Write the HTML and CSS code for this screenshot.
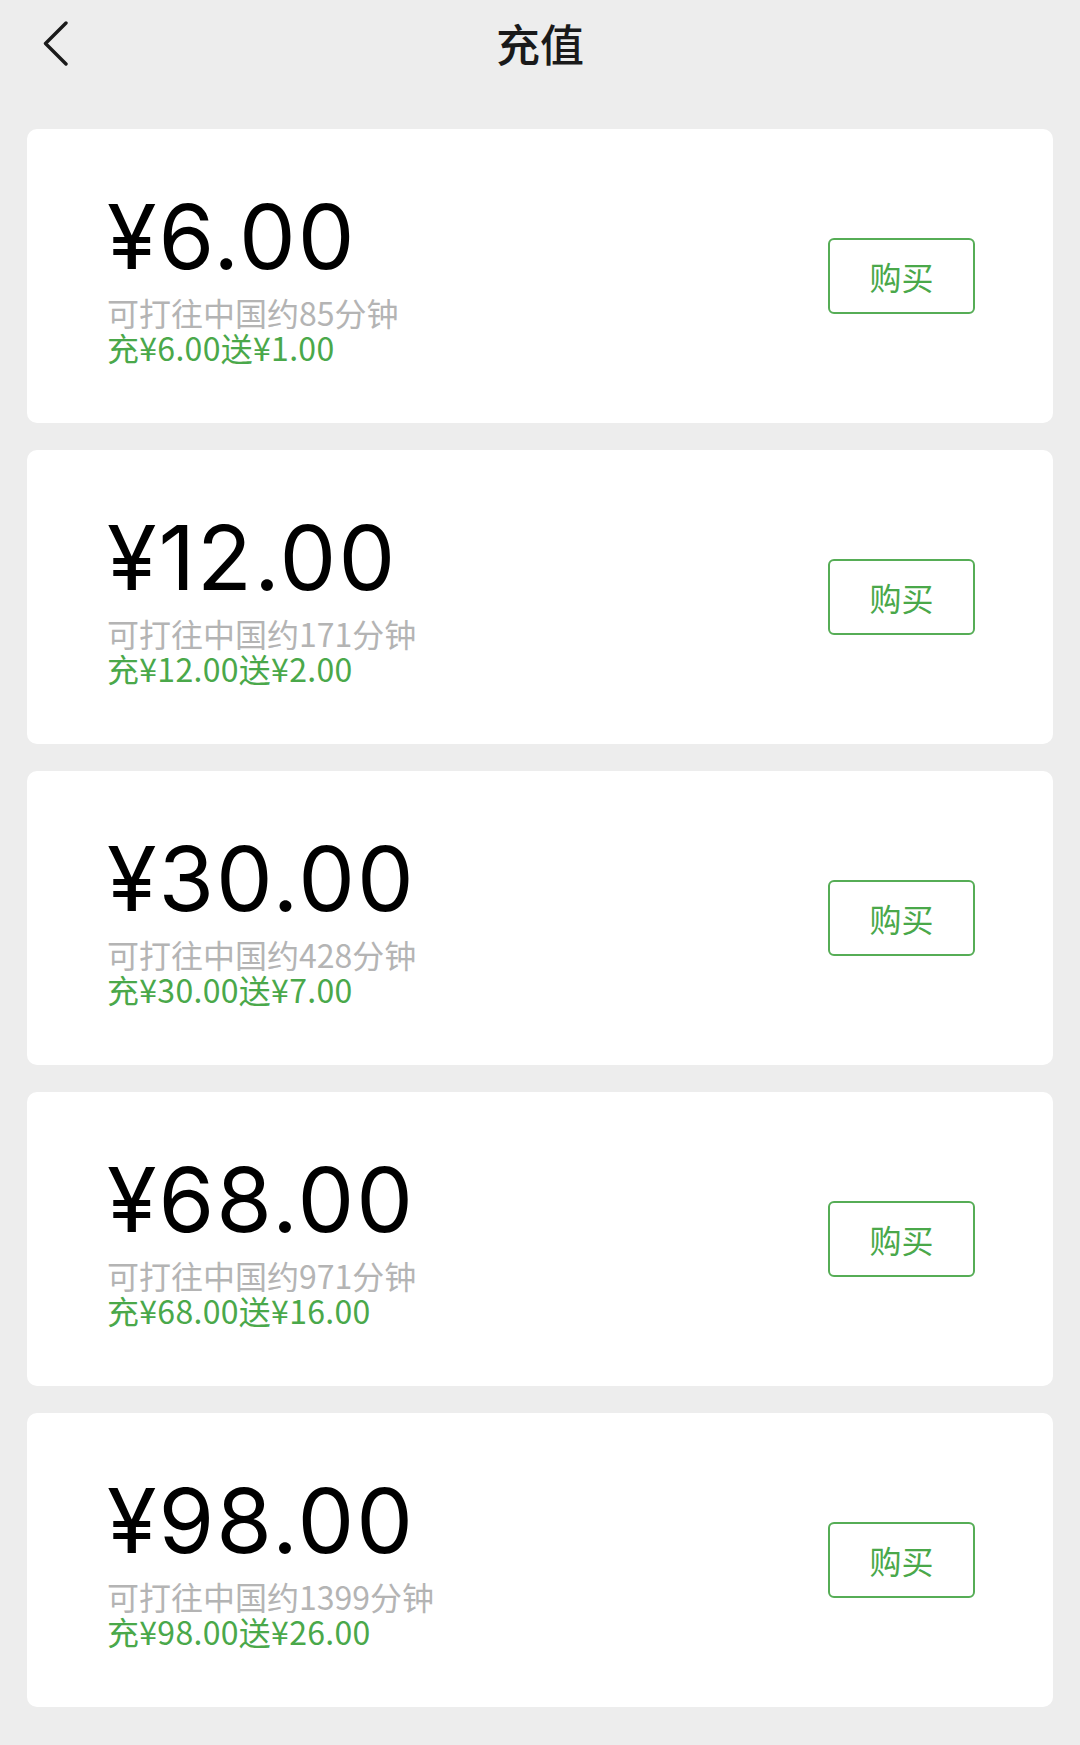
FILE: index.html
```html
<!DOCTYPE html>
<html lang="zh-CN">
<head>
<meta charset="utf-8">
<title>充值</title>
<link rel="stylesheet" href="styles.css">
</head>
<body>
<div class="page">
  <header class="nav">
    <div class="nav-left">
      <svg class="back" width="26" height="45" viewBox="0 0 26 45" aria-hidden="true">
        <path d="M23 2 L2.5 22.5 L23 43" fill="none" stroke="#1a1a1a" stroke-width="3.4" stroke-linecap="round" stroke-linejoin="round"/>
      </svg>
    </div>
    <h1 class="title">充值</h1>
    <div class="nav-right"></div>
  </header>

  <main class="list">
    <section class="card">
      <div class="info">
        <div class="price">¥6.00</div>
        <div class="minutes">可打往中国约85分钟</div>
        <div class="bonus">充¥6.00送¥1.00</div>
      </div>
      <button class="buy">购买</button>
    </section>
    <section class="card">
      <div class="info">
        <div class="price">¥12.00</div>
        <div class="minutes">可打往中国约171分钟</div>
        <div class="bonus">充¥12.00送¥2.00</div>
      </div>
      <button class="buy">购买</button>
    </section>
    <section class="card">
      <div class="info">
        <div class="price">¥30.00</div>
        <div class="minutes">可打往中国约428分钟</div>
        <div class="bonus">充¥30.00送¥7.00</div>
      </div>
      <button class="buy">购买</button>
    </section>
    <section class="card">
      <div class="info">
        <div class="price">¥68.00</div>
        <div class="minutes">可打往中国约971分钟</div>
        <div class="bonus">充¥68.00送¥16.00</div>
      </div>
      <button class="buy">购买</button>
    </section>
    <section class="card">
      <div class="info">
        <div class="price">¥98.00</div>
        <div class="minutes">可打往中国约1399分钟</div>
        <div class="bonus">充¥98.00送¥26.00</div>
      </div>
      <button class="buy">购买</button>
    </section>
  </main>
</div>
</body>
</html>
```

FILE: styles.css
```css
html, body {
  margin: 0;
  padding: 0;
  background: #ededed;
}

body {
  font-family: "Noto Sans CJK SC", "Noto Sans", sans-serif;
  color: #111;
}

.page {
  width: 1080px;
  min-height: 1745px;
  box-sizing: border-box;
  padding: 0 27px;
}

.nav {
  height: 86px;
  display: grid;
  grid-template-columns: 1fr auto 1fr;
  align-items: center;
}

.nav-left {
  display: flex;
  align-items: center;
  padding-left: 16px;
}

.back {
  display: block;
}

.title {
  margin: 0;
  font-size: 44px;
  line-height: 86px;
  font-weight: 500;
  color: #1a1a1a;
  letter-spacing: 0;
}

.list {
  margin-top: 43px;
  display: flex;
  flex-direction: column;
  gap: 27px;
}

.card {
  height: 294px;
  box-sizing: border-box;
  background: #fff;
  border-radius: 10px;
  padding: 4px 78px 0 80px;
  display: flex;
  align-items: center;
  justify-content: space-between;
}

.info {
  display: flex;
  flex-direction: column;
}

.price {
  font-family: Inter, "Liberation Sans", sans-serif;
  font-size: 90px;
  line-height: 90px;
  font-weight: 400;
  color: #000;
  margin-bottom: 13px;
  letter-spacing: 2px;
}

.minutes {
  font-size: 32px;
  line-height: 35px;
  color: #b4b4b4;
}

.bonus {
  font-size: 32px;
  line-height: 35px;
  color: #4aa84a;
  letter-spacing: 0.3px;
}

.buy {
  width: 147px;
  height: 76px;
  box-sizing: border-box;
  margin-bottom: 4px;
  border: 2.5px solid #56ad56;
  border-radius: 6px;
  background: #fff;
  color: #4aa84a;
  font-family: "Noto Sans CJK SC", sans-serif;
  font-size: 32px;
  line-height: 1;
  padding: 0;
}
```
